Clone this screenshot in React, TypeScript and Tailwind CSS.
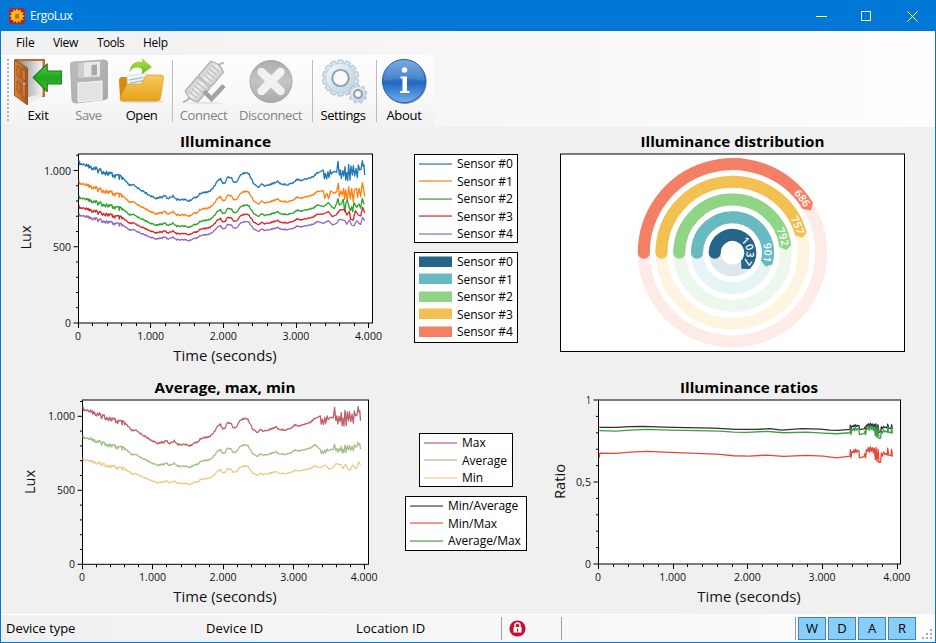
import React from "react";

type Pt = [number, number];

const FONT = "'Open Sans', 'Noto Sans', sans-serif";

/* ---------- measurement data: [seconds, lux] ---------- */

const toSample = (x: number, y: number): Pt => [(x / 3 - 78.5) / 0.07263, (193 - y / 3) / 0.1525];

const baseTrace: Pt[] = [
  [237, 95], [240, 103], [265, 105], [280, 118], [300, 121], [330, 133], [350, 139], [370, 148], [380, 157],
  [388, 166], [400, 165], [420, 178], [440, 191], [465, 205], [480, 202], [487, 202], [493, 195], [503, 206],
  [520, 197], [530, 209], [550, 208], [568, 213], [580, 204], [592, 200], [602, 190], [630, 184], [640, 172],
  [655, 149], [662, 147], [668, 160], [676, 158], [683, 140], [695, 144], [700, 157], [712, 155], [720, 135],
  [737, 127], [748, 133], [760, 160], [775, 172], [785, 163], [795, 168], [810, 163], [820, 160], [833, 154],
  [845, 163], [865, 163], [880, 157], [892, 147], [905, 151], [940, 140], [955, 126],
];

const late: Pt[][] = [
  [[340, 120], [343, 146], [346, 130], [350, 147], [354, 125], [357, 143], [361, 120], [364, 132], [372, 124],
   [380, 127], [384, 94], [388, 135], [391, 120], [394, 145], [398, 122], [401, 138], [405, 110], [407, 150],
   [410, 128], [413, 152], [416, 103], [420, 150], [423, 108], [427, 135], [430, 107], [434, 138], [438, 115],
   [442, 143], [445, 105], [449, 120], [453, 118], [457, 92], [460, 110], [462, 105], [464, 135]],
  [[340, 182], [344, 205], [350, 190], [356, 206], [362, 183], [372, 190], [380, 185], [385, 160], [388, 200],
   [393, 183], [397, 195], [401, 175], [404, 208], [407, 180], [412, 212], [416, 170], [421, 207], [425, 175],
   [430, 215], [433, 180], [440, 175], [443, 202], [447, 175], [452, 200], [457, 158], [461, 178], [464, 200]],
  [[340, 230], [355, 218], [365, 230], [373, 236], [380, 220], [384, 205], [388, 225], [394, 222], [400, 208],
   [404, 245], [408, 218], [412, 210], [417, 230], [421, 242], [425, 230], [428, 245], [432, 218], [440, 232],
   [447, 222], [452, 235], [457, 205], [461, 220], [464, 222]],
  [[340, 252], [355, 245], [367, 260], [378, 255], [390, 240], [405, 238], [410, 255], [418, 245], [422, 268],
   [430, 270], [436, 242], [445, 255], [452, 258], [458, 232], [464, 248]],
  [[340, 280], [355, 272], [368, 285], [380, 280], [388, 268], [405, 272], [410, 283], [418, 270], [425, 285],
   [432, 288], [440, 272], [447, 280], [452, 283], [458, 262], [464, 272]],
];

const wobble = (i: number) => {
  const s = Math.sin(i * 12.9898) * 43758.5453;
  return (s - Math.floor(s)) * 2 - 1;
};

function buildSeries(scale: number, tail: Pt[]): Pt[] {
  const out: Pt[] = [];
  let n = 0;
  for (let k = 0; k < baseTrace.length - 1; k++) {
    const [x0, y0] = baseTrace[k];
    const [x1, y1] = baseTrace[k + 1];
    for (let x = x0; x < x1; x += 2) {
      const amp = x < 265 ? 4 : x < 375 ? 9 : 2.5;
      const y = y0 + ((y1 - y0) * (x - x0)) / (x1 - x0) + wobble(n++) * amp;
      const [t, lux] = toSample(x, y);
      out.push([t, lux * scale]);
    }
  }
  tail.forEach(([x, y]) => out.push(toSample(x + 630, y)));
  return out;
}

const scales = [1, 0.876, 0.785, 0.724, 0.675];
const sensors = scales.map((s, i) => buildSeries(s, late[i]));
const averageTail: Pt[] = late[0].map(([x, y]) => [x, 226 + (y - 124) * 0.5 - (x - 340) * 0.07]);
const average = buildSeries(0.819, averageTail);

const spikes: Pt[] = [
  [931, 1], [933, -0.5], [936, 0.7], [939, 0.5], [942, 1], [944, 0.4], [947, 1.1], [950, 0.5], [953, 0.9], [957, 0.8],
  [958, -0.5], [972, -0.3], [975, 0.3], [977, -0.5], [979, 1], [982, 0.7], [985, 1.4], [988, 0.5], [991, 1.6],
  [994, 0.7], [997, 1.4], [1000, 0.4], [1003, 1.3], [1006, -0.8], [1008, 1.4], [1011, -1.2], [1014, 1.1],
  [1017, -1.4], [1022, -1.3], [1024, 0.4], [1027, -0.2], [1031, 0.6], [1034, 0.1], [1038, 0.3], [1042, 0], [1043, 1.3],
  [1046, 0], [1053, -0.1], [1055, 1.1], [1057, -0.3],
];
const ratioSeries = (head: Pt[], mid: number, amp: number): Pt[] =>
  [...head, ...spikes.map(([x, d]): Pt => [x, mid - d * amp])].map(([x, y]) => [
    (540 + x / 3 - 598.5) / 0.0747,
    (563.7 - (375 + y / 3)) / 163.7,
  ]);
const minAverage = ratioSeries([[178, 157], [230, 157], [270, 155], [310, 154], [370, 156], [440, 158], [520, 159], [590, 163], [650, 163], [690, 161], [725, 165], [785, 161], [840, 162], [870, 165], [895, 166], [930, 163]], 159, 9);
const averageMax = ratioSeries([[178, 167], [228, 168], [270, 165], [320, 163], [390, 165], [470, 167], [540, 168], [580, 171], [620, 172], [680, 169], [730, 173], [800, 171], [850, 174], [890, 176], [930, 173]], 172, 13);
const minMax = ratioSeries([[178, 248], [179, 234], [228, 235], [270, 231], [320, 229], [390, 232], [470, 235], [540, 238], [580, 242], [625, 243], [680, 240], [730, 244], [800, 241], [850, 243], [890, 248], [930, 243]], 240, 16);

/* ---------- charts ---------- */

interface PlotProps {
  view: string; width: number; height: number;
  title: string; titleX: number; titleY: number; titleW: number;
  x0: number; y0: number; right: number; top: number;
  sx: number; sy: number; yMinor: number; yTicks: [number, string, number][];
  yLabel: string; yLabelX: number; yLabelY: number; yLabelW: number;
  xLabelX: number; xLabelY: number;
  lines: { color: string; data: Pt[] }[];
}

function Plot(p: PlotProps) {
  const minorsX = Array.from({ length: 21 }, (_, i) => i * 200);
  const minorsY: number[] = [];
  for (let i = 0; p.y0 - i * p.yMinor * p.sy >= p.top - 1; i++) minorsY.push(i);
  const path = (d: Pt[]) =>
    d.map(([t, v], i) => `${i ? "L" : "M"}${(p.x0 + t * p.sx).toFixed(2)} ${(p.y0 - v * p.sy).toFixed(2)}`).join("");
  return (
    <svg width={p.width} height={p.height} viewBox={p.view} fontFamily={FONT} className="block shrink-0">
      <text x={p.titleX} y={p.titleY} fontSize="15" fontWeight="700" textAnchor="middle" textLength={p.titleW} lengthAdjust="spacingAndGlyphs">{p.title}</text>
      <rect x={p.x0} y={p.top} width={p.right - p.x0} height={p.y0 - p.top} fill="#fff" stroke="#000" />
      {p.lines.map((l, i) => (
        <path key={i} d={path(l.data)} fill="none" stroke={l.color} strokeWidth="1.3" strokeLinejoin="round" />
      ))}
      <g stroke="#000">
        {minorsX.map((t) => {
          const x = Math.round(p.x0 + t * p.sx - 0.7) + 0.5;
          return <line key={t} x1={x} x2={x} y1={p.y0} y2={p.y0 + (t % 1000 ? 3 : 5)} />;
        })}
        {minorsY.map((i) => {
          const y = p.y0 - i * p.yMinor * p.sy;
          return <line key={i} x1={p.x0 - (i % 5 ? 2.5 : 5)} x2={p.x0} y1={y} y2={y} />;
        })}
      </g>
      <g fontSize="10.7" fill="#111">
        {["0", "1.000", "2.000", "3.000", "4.000"].map((s, i) => (
          <text key={s} x={p.x0 + i * 1000 * p.sx - 0.5} y={p.y0 + 16.8} textAnchor="middle" textLength={i ? 27 : 6} lengthAdjust="spacingAndGlyphs">{s}</text>
        ))}
        {p.yTicks.map(([v, s, w]) => (
          <text key={s} x={p.x0 - 7.5} y={p.y0 - v * p.sy + 4} textAnchor="end" textLength={w} lengthAdjust="spacingAndGlyphs">{s}</text>
        ))}
      </g>
      <text x={p.xLabelX} y={p.xLabelY} fontSize="14.8" fill="#111" textAnchor="middle" textLength="103.5" lengthAdjust="spacingAndGlyphs">Time (seconds)</text>
      <text transform={`translate(${p.yLabelX} ${p.yLabelY}) rotate(-90)`} fontSize="14.5" fill="#111" textAnchor="middle" textLength={p.yLabelW} lengthAdjust="spacingAndGlyphs">{p.yLabel}</text>
    </svg>
  );
}

const rings = [
  { r: 17.75, end: 43, tip: 61, color: "#266489", pale: "#dfe7ec", label: "1037" },
  { r: 35.5, end: 16, tip: 22.7, color: "#68b9c0", pale: "#e6f4f5", label: "901" },
  { r: 53.2, end: -7.3, tip: -3, color: "#90d585", pale: "#ecf8eb", label: "792" },
  { r: 71, end: -15.4, tip: -12, color: "#f3c151", pale: "#fdf5e2", label: "757" },
  { r: 88.7, end: -32, tip: -28.2, color: "#f37f64", pale: "#fdebe8", label: "686" },
];

function RadialGauge() {
  const cx = 732.5, cy = 252.7;
  const at = (r: number, deg: number) => {
    const a = (deg * Math.PI) / 180;
    return `${(cx + r * Math.cos(a)).toFixed(2)} ${(cy + r * Math.sin(a)).toFixed(2)}`;
  };
  return (
    <svg width="399" height="243" viewBox="536 127 399 243" fontFamily={FONT} className="block shrink-0">
      <text x="732.5" y="147" fontSize="15" fontWeight="700" textAnchor="middle" textLength="184" lengthAdjust="spacingAndGlyphs">Illuminance distribution</text>
      <rect x="560.5" y="154" width="344" height="197.5" fill="#fff" stroke="#000" />
      {rings.map((g) => (
        <g key={g.label}>
          <circle cx={cx} cy={cy} r={g.r} fill="none" stroke={g.pale} strokeWidth="12" />
          <circle cx={cx - g.r} cy={cy} r="6" fill={g.color} />
          <path d={`M${at(g.r, 180)}A${g.r} ${g.r} 0 ${g.end > 0 ? 1 : 0} 1 ${at(g.r, g.end)}`} fill="none" stroke={g.color} strokeWidth="12" />
          <path d={`M${at(g.r - 6, g.end - 1)}L${at(g.r + 6, g.end - 1)}L${at(g.r + 6, g.end)}L${at(g.r + 0.6, g.tip)}L${at(g.r - 6, g.end)}Z`} fill={g.color} />
          <path id={`ring-${g.label}`} d={`M${at(g.r - 3.7, 180)}A${g.r - 3.7} ${g.r - 3.7} 0 ${g.end > 0 ? 1 : 0} 1 ${at(g.r - 3.7, g.end)}`} fill="none" />
          <text fontSize="10.4" fontWeight="600" fill="#fff" textAnchor="end">
            <textPath href={`#ring-${g.label}`} startOffset="100%">{g.label}</textPath>
          </text>
        </g>
      ))}
    </svg>
  );
}

function Legend({ items, filled = false, className }: { items: [string, string][]; filled?: boolean; className: string }) {
  return (
    <div className={`flex flex-col border border-black bg-white pl-1 text-[12px] leading-[17.5px] ${className}`}>
      {items.map(([label, color]) => (
        <div key={label} className="flex h-[17.5px] items-center gap-[5px] whitespace-nowrap">
          <svg width="33" height="12" viewBox="0 0 33 12" className="block shrink-0">
            <rect y={filled ? 0.5 : 5.3} width="33" height={filled ? 10.5 : 1.5} fill={color} />
          </svg>
          <span className="tracking-[-0.04px]">{label}</span>
        </div>
      ))}
    </div>
  );
}

/* ---------- icons ---------- */

const Svg = ({ children, size = 48 }: { children: React.ReactNode; size?: number }) => (
  <svg width={size} height={size} viewBox="0 0 48 48" className="block shrink-0">{children}</svg>
);

const ExitIcon = () => (
  <Svg>
    <defs>
      <linearGradient id="wood"><stop stopColor="#d98542" /><stop offset="1" stopColor="#a9551f" /></linearGradient>
      <linearGradient id="wall"><stop stopColor="#8d8d8d" /><stop offset="1" stopColor="#f4f4f4" /></linearGradient>
      <linearGradient id="arrow" x2="0" y2="1"><stop stopColor="#63c957" /><stop offset=".5" stopColor="#1ca51c" /><stop offset="1" stopColor="#47c43b" /></linearGradient>
    </defs>
    <path d="M.5 2H31V40H14V46L.5 38Z" fill="#c56d2f" />
    <path d="M4 4H28.500V39L14 46Z" fill="url(#wall)" />
    <path d="M14 40L28 37V40L14 47Z" fill="#ececec" />
    <path d="M.5 3L13.500 11V48L.5 38.500Z" fill="url(#wood)" stroke="#8c4619" strokeWidth=".8" />
    <path d="M3 8.500L6 10.500V21L3 19ZM8 11.500L11.500 14V24L8 22ZM3 24L6 26V36L3 34ZM8 27L11.500 29V42L8 39Z" fill="#cf7836" stroke="#914718" strokeWidth=".7" />
    <circle cx="10" cy="27" r="1.3" fill="#ddd" stroke="#666" strokeWidth=".5" />
    <path d="M19.500 20.500L33.500 7V14H48V27H33.500V34.500Z" transform="translate(-.3 0)" fill="url(#arrow)" stroke="#15801a" strokeWidth="1.2" strokeLinejoin="round" />
  </Svg>
);

const SaveIcon = () => (
  <Svg>
    <defs><linearGradient id="disk" x2="1" y2="1"><stop stopColor="#bdbdbd" /><stop offset="1" stopColor="#a8a8a8" /></linearGradient></defs>
    <path d="M5.500 7Q5.500 5 8 5L39 3Q42.500 3 42.500 6V40Q42.500 42 40 42.500L11 46Q8 46 7 43Z" fill="url(#disk)" stroke="#a4a4a4" strokeWidth=".8" />
    <path d="M13 6L35 4.500V19Q35 20 33 20L15 21Q13 21 13 19Z" fill="#cdcdcd" />
    <path d="M19 5.500L35 4.500V19L19 20Z" fill="#e9e9e9" />
    <path d="M26.500 8L32 7.500V18L26.500 18.500Z" fill="#a8a8a8" />
    <path d="M13 26L37 24V42.500L13 45Z" fill="#e3e3e3" stroke="#f7f7f7" />
  </Svg>
);

const OpenIcon = () => (
  <Svg>
    <defs>
      <linearGradient id="folder" x2="0" y2="1"><stop stopColor="#f7ca5e" /><stop offset="1" stopColor="#e5a21b" /></linearGradient>
      <linearGradient id="curve" x2="0" y2="1"><stop stopColor="#b7e35a" /><stop offset="1" stopColor="#68bc13" /></linearGradient>
    </defs>
    <ellipse cx="24" cy="44.500" rx="22" ry="1.800" fill="#ddd" />
    <path d="M1 24Q1 20 4 20H9L11 23L20 28L5 43L2 41Z" fill="#d98913" />
    <path d="M9 19L28 16L32 33L10 39Z" fill="#f1f5f8" stroke="#cbd3d8" strokeWidth=".7" />
    <path d="M11 23L25 20.500M12 26L26 23.500M13 29L25 27" stroke="#8ab0cc" strokeWidth="1.2" />
    <path d="M8 29Q9 27 11 27H23L27 20Q28 18 30 18H43Q46 18 45.500 21L42.500 41Q42 44 39 44H5Q1.500 44 2 41Z" fill="url(#folder)" stroke="#dd9b1d" strokeWidth=".7" />
    <path d="M11 15Q14 2 24 5V1L34 10L24 17V12Q17 8 11 15Z" fill="url(#curve)" />
  </Svg>
);

const ConnectIcon = () => (
  <Svg>
    <defs><linearGradient id="plug" x2="1" y2="0"><stop stopColor="#cfcfcf" /><stop offset=".5" stopColor="#eee" /><stop offset="1" stopColor="#cacaca" /></linearGradient></defs>
    <path d="M3 45Q6 45 10 40M37 12Q38 6 44 6" fill="none" stroke="#bbb" strokeWidth="2.2" />
    <ellipse cx="25" cy="46" rx="18" ry="1.200" fill="#e5e5e5" />
    <g transform="rotate(41 24 25)">
      <path d="M15.500 5Q24 0 32.500 5V24H15.500ZM15.500 25.500H32.500V44Q24 49 15.500 44Z" fill="url(#plug)" stroke="#a6a6a6" />
      <path d="M19 7.500H29M19 11.500H29M19 15.500H29M19 19.500H29M19 30H29M19 34H29M19 38H29M19 42H29" stroke="#bdbdbd" strokeWidth="1.300" />
    </g>
    <path d="M24 34L31.500 42L44 28.500" fill="none" stroke="#a2a2a2" strokeWidth="4.600" />
  </Svg>
);

const DisconnectIcon = () => (
  <Svg>
    <defs><linearGradient id="grey" x2="0" y2="1"><stop stopColor="#adadad" /><stop offset=".5" stopColor="#c4c4c4" /><stop offset="1" stopColor="#a9a9a9" /></linearGradient></defs>
    <circle cx="24" cy="24.500" r="21" fill="url(#grey)" stroke="#a5a5a5" />
    <path d="M14.500 15L33.500 34M33.500 15L14.500 34" stroke="#f1f1f1" strokeWidth="8.500" strokeLinecap="round" />
  </Svg>
);

function Gear({ cx, cy, r, teeth, hole }: { cx: number; cy: number; r: number; teeth: number; hole: number }) {
  return (
    <g transform={`translate(${cx} ${cy})`}>
      {Array.from({ length: teeth }, (_, i) => (
        <rect key={i} x={-r * 0.15} y={-r} width={r * 0.3} height={r * 0.4} rx=".8" transform={`rotate(${(i * 360) / teeth})`} fill="#d8e5ee" stroke="#96aab9" strokeWidth=".7" />
      ))}
      <circle r={r * 0.82} fill="url(#steel)" stroke="#b6c8d5" strokeWidth=".6" />
      <circle r={hole + 1.1} fill="none" stroke="#8296a5" strokeWidth="1.6" />
      <circle r={hole} fill="#fafafa" stroke="#b8c7d2" strokeWidth=".6" />
    </g>
  );
}

const SettingsIcon = () => (
  <Svg>
    <defs><linearGradient id="steel" x2="1" y2="1"><stop stopColor="#f4f9fc" /><stop offset=".6" stopColor="#cfe0eb" /><stop offset="1" stopColor="#bfd3e0" /></linearGradient></defs>
    <Gear cx={21.5} cy={21} r={18} teeth={14} hole={7.2} />
    <Gear cx={39} cy={37} r={9.3} teeth={9} hole={3} />
  </Svg>
);

const AboutIcon = () => (
  <Svg>
    <defs><linearGradient id="ball" x2="0" y2="1"><stop stopColor="#6aa2dd" /><stop offset=".45" stopColor="#2f74c6" /><stop offset=".55" stopColor="#2469c0" /><stop offset="1" stopColor="#72b1ee" /></linearGradient></defs>
    <circle cx="24.700" cy="25" r="22" fill="#85898f" />
    <circle cx="24" cy="24" r="21.600" fill="url(#ball)" stroke="#2868b0" strokeWidth="1" />
    <path d="M3.500 24Q4 5 24 3.500Q44 5 44.500 24Q24 19 3.500 24Z" fill="#fff" opacity=".12" />
    <circle cx="24.500" cy="13" r="2.700" fill="#fff" />
    <path d="M20.500 19.500H27V34H29.500V36H20V34H22.500V21.500H20.500Z" fill="#fff" />
  </Svg>
);

const AppIcon = () => (
  <svg width="16" height="16" viewBox="0 0 16 16" className="block shrink-0">
    <rect width="16" height="16" rx="3" fill="#b6202d" />
    <path d="M8 .3L9.200 3L11.500 1.300L11.700 4.200L14.600 4L13.200 6.800L15.700 8L13.200 9.400L14.600 12L11.700 11.800L11.500 14.700L9 13L8 15.700L6.800 13L4.400 14.700L4.300 11.800L1.300 12L2.800 9.300L.3 8L2.800 6.700L1.300 4L4.300 4.200L4.500 1.300L6.800 3Z" fill="#ffc815" />
    <circle cx="8" cy="8" r="3.500" fill="#fab41a" />
    <rect x="6" y="6" width="4" height="4.500" fill="#ec5a22" />
  </svg>
);

/* ---------- chrome ---------- */

function Tool({ icon, label, disabled, className, text }: { icon: React.ReactNode; label: string; disabled?: boolean; className: string; text: string }) {
  return (
    <div className={`flex shrink-0 flex-col items-center ${disabled ? "text-[#828282]" : "text-black"} ${className}`}>
      {icon}
      <span className={`mt-px whitespace-nowrap text-[13px] leading-[18px] ${text}`}>{label}</span>
    </div>
  );
}

const Divider = () => <div className="mt-[5px] h-[62px] w-px shrink-0 bg-[#bdbdbd]" />;

export default function App() {
  return (
    <div className="flex h-[643px] w-[936px] flex-col overflow-hidden border border-[#0078d7] bg-[#f0f0f0] font-['Open_Sans','Noto_Sans',sans-serif] text-black">
      <header className="flex h-[30px] shrink-0 items-center bg-[#0078d7] pl-2 text-white">
        <AppIcon />
        <span className="ml-[5px] text-[12px] tracking-[-0.4px]">ErgoLux</span>
        <div className="ml-auto flex h-full">
          {["M0 5.500H11", "M.5.500H9.500V9.500H.5Z", "M.5.500L10.500 10.500M10.500.500L.5 10.500"].map((d, i) => (
            <div key={i} className="flex w-[45.500px] items-center justify-center">
              <svg width="11" height="11" viewBox="0 0 11 11"><path d={d} fill="none" stroke="#fff" /></svg>
            </div>
          ))}
        </div>
      </header>

      <div className="shrink-0 bg-linear-to-r from-[#f0f0f0] to-[#fdfdfd]">
        <nav className="flex h-[24px] items-center pl-[15px] text-[12px]">
          <span className="w-[37px] tracking-[-0.1px]">File</span>
          <span className="w-[44px] tracking-[-0.3px]">View</span>
          <span className="w-[46px] tracking-[-0.5px]">Tools</span>
          <span className="tracking-[-0.3px]">Help</span>
        </nav>
        <div className="flex h-[72px] w-[433px] rounded-tr-md bg-linear-to-b from-[#fdfdfd] via-[#fafafa] to-[#f1f1f1] pl-[6px]">
          <div className="mt-[4px] h-[62px] w-[2px] shrink-0 bg-[repeating-linear-gradient(to_bottom,#b5b5b5_0px,#b5b5b5_2px,transparent_2px,transparent_4px)]" />
          <div className="flex pt-[2px]">
            <Tool icon={<ExitIcon />} label="Exit" className="ml-[5px] w-[48px]" text="tracking-[-0.2px]" />
            <Tool icon={<SaveIcon />} label="Save" disabled className="w-[53px]" text="tracking-[-0.4px]" />
            <Tool icon={<OpenIcon />} label="Open" className="w-[53px]" text="tracking-[-0.4px]" />
          </div>
          <div className="ml-[4px]"><Divider /></div>
          <div className="flex pt-[2px]">
            <Tool icon={<ConnectIcon />} label="Connect" disabled className="w-[61px]" text="tracking-[-0.4px]" />
            <Tool icon={<DisconnectIcon />} label="Disconnect" disabled className="w-[73px]" text="tracking-[-0.4px]" />
          </div>
          <div className="ml-[5px]"><Divider /></div>
          <div className="flex pt-[2px]"><Tool icon={<SettingsIcon />} label="Settings" className="w-[60px]" text="tracking-[-0.4px]" /></div>
          <div className="ml-[3px]"><Divider /></div>
          <div className="flex pt-[2px]"><Tool icon={<AboutIcon />} label="About" className="w-[54px]" text="tracking-[-0.3px]" /></div>
        </div>
      </div>

      <main className="flex h-[487px] shrink-0 flex-col">
        <div className="flex h-[243px]">
          <Plot view="1 127 395 243" width={395} height={243} title="Illuminance" titleX={225.5} titleY={147} titleW={91}
            x0={78.5} y0={323} right={372.5} top={154} sx={0.07263} sy={0.1525} yMinor={100}
            yTicks={[[0, "0", 6], [500, "500", 18], [1000, "1.000", 27]]}
            yLabel="Lux" yLabelX={30.5} yLabelY={237.5} yLabelW={24} xLabelX={225} xLabelY={360.5}
            lines={["#1f77b4", "#ff7f0e", "#2ca02c", "#d62728", "#9467bd"].map((color, i) => ({ color, data: sensors[i] }))} />
          <div className="flex w-[140px] shrink-0 flex-col items-center gap-[9px] pt-[27px]">
            <Legend className="h-[89px] w-[104px]" items={[["Sensor #0", "#4c92c3"], ["Sensor #1", "#ff983e"], ["Sensor #2", "#56b356"], ["Sensor #3", "#de5253"], ["Sensor #4", "#a985ca"]]} />
            <Legend className="h-[91px] w-[104px]" filled items={[["Sensor #0", "#266489"], ["Sensor #1", "#68b9c0"], ["Sensor #2", "#90d585"], ["Sensor #3", "#f3c151"], ["Sensor #4", "#f37f64"]]} />
          </div>
          <RadialGauge />
        </div>
        <div className="flex h-[244px]">
          <Plot view="1 370 395 244" width={395} height={244} title="Average, max, min" titleX={225} titleY={393} titleW={141}
            x0={82.5} y0={564.3} right={368.5} top={400} sx={0.07055} sy={0.148} yMinor={100}
            yTicks={[[0, "0", 6], [500, "500", 18], [1000, "1.000", 27]]}
            yLabel="Lux" yLabelX={34.5} yLabelY={482} yLabelW={24} xLabelX={225} xLabelY={601.5}
            lines={[{ color: "#bf616a", data: sensors[0] }, { color: "#a3be8c", data: average }, { color: "#ebcb8b", data: sensors[4] }]} />
          <div className="flex w-[140px] shrink-0 flex-col items-center gap-[9px] pt-[63px]">
            <Legend className="h-[54px] w-[94px]" items={[["Max", "#cb8389"], ["Average", "#b6cba3"], ["Min", "#f0d8a7"]]} />
            <Legend className="h-[55px] w-[122px]" items={[["Min/Average", "#65656f"], ["Min/Max", "#ed7469"], ["Average/Max", "#6eb06f"]]} />
          </div>
          <Plot view="536 370 399 244" width={399} height={244} title="Illuminance ratios" titleX={749} titleY={393} titleW={138}
            x0={598.5} y0={564} right={900.5} top={400} sx={0.0747} sy={164} yMinor={0.1}
            yTicks={[[0, "0", 6], [0.5, "0,5", 15], [1, "1", 5]]}
            yLabel="Ratio" yLabelX={565} yLabelY={481.5} yLabelW={35} xLabelX={749} xLabelY={601.5}
            lines={[{ color: "#2f2f3b", data: minAverage }, { color: "#e5473b", data: minMax }, { color: "#3f9c45", data: averageMax }]} />
        </div>
      </main>

      <footer className="flex h-[28px] shrink-0 items-center border-t border-white bg-linear-to-r from-[#f0f0f0] to-[#fdfdfd] pl-[5px] text-[13px]">
        <span className="w-[200px] pt-px tracking-[-0.04px]">Device type</span>
        <span className="w-[150px] pt-px tracking-[0.1px]">Device ID</span>
        <span className="w-[145px] pt-px tracking-[0.1px]">Location ID</span>
        <div className="h-[23px] w-px bg-[#a0a0a0]" />
        <svg width="17" height="17" viewBox="0 0 17 17" className="ml-[7px]">
          <circle cx="8.500" cy="8.500" r="8.100" fill="#c8102e" />
          <path d="M6 8V5.500Q6 3 8.500 3T11 5.500V8" fill="none" stroke="#fff" strokeWidth="1.500" />
          <rect x="4.500" y="7" width="8" height="5.500" fill="#fff" />
          <rect x="8" y="8.500" width="1.200" height="3" fill="#c8102e" />
        </svg>
        <div className="ml-[35px] h-[23px] w-px bg-[#a0a0a0]" />
        <div className="ml-auto flex h-full items-center">
          <div className="mr-[2px] h-[23px] w-px bg-[#a0a0a0]" />
          <div className="flex gap-[2px]">
            {["W", "D", "A", "R"].map((s) => (
              <div key={s} className="flex h-[23px] w-[28px] items-center justify-center border border-[#4682b4] bg-[#87cefa] pt-px">{s}</div>
            ))}
          </div>
          <svg width="11" height="11" viewBox="0 0 11 11" className="ml-[6px] mr-[2px] mt-[12px]" fill="#aaa">
            <path d="M8 0h2v2h-2zM4 4h2v2h-2zM8 4h2v2h-2zM0 8h2v2h-2zM4 8h2v2h-2zM8 8h2v2h-2z" />
          </svg>
        </div>
      </footer>
    </div>
  );
}
